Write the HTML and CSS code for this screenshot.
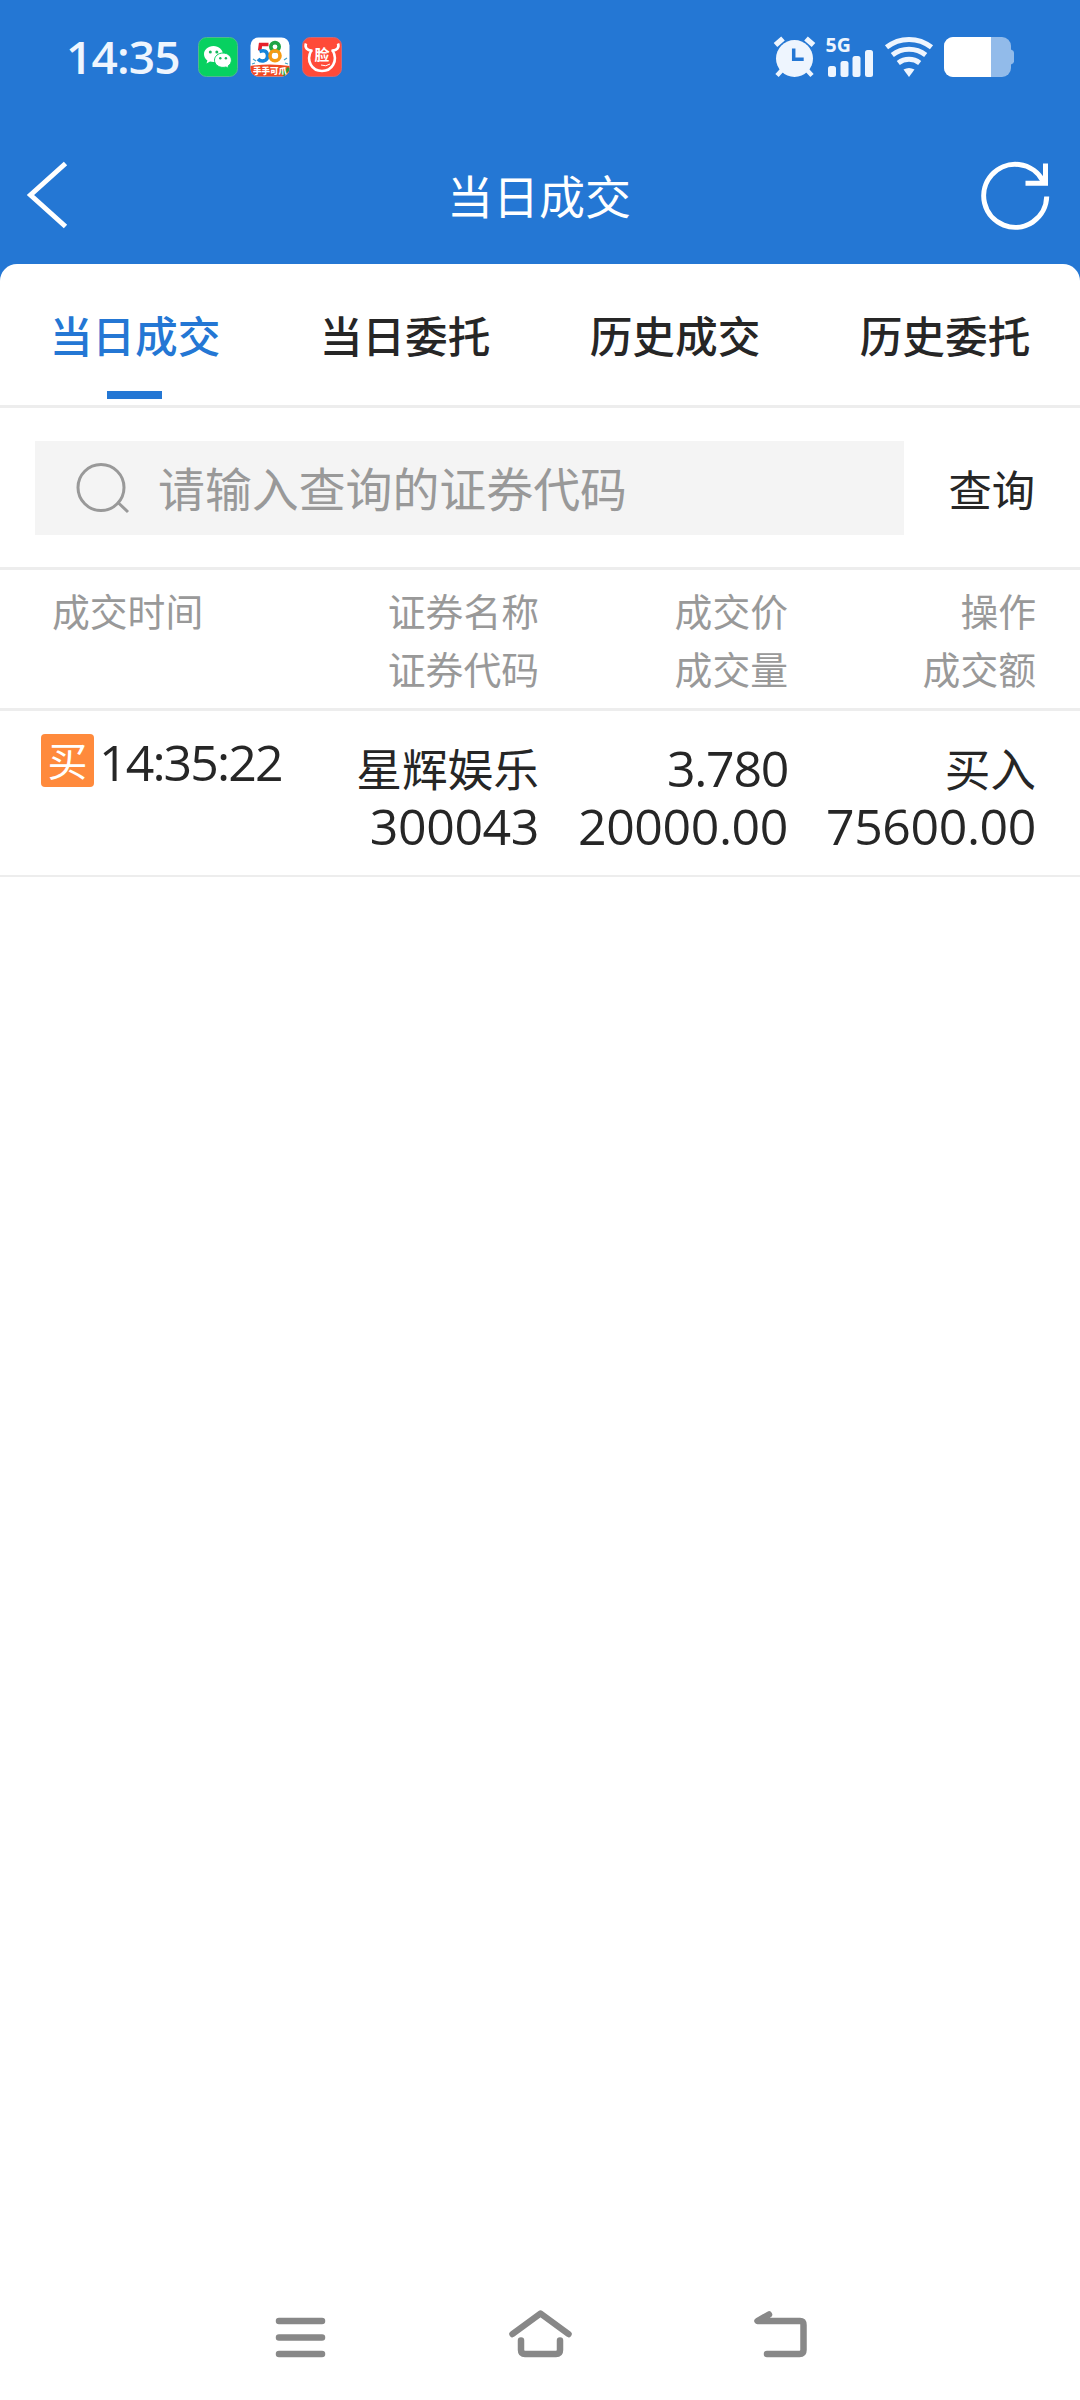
FILE: index.html
```html
<!DOCTYPE html>
<html lang="zh-CN">
<head>
<meta charset="utf-8">
<title>当日成交</title>
<link rel="stylesheet" href="styles.css">
</head>
<body>
<div class="screen">
  <header class="top">
    <div class="status">
      <span class="clock">14:35</span>
      <svg class="app-icon" width="40" height="40" viewBox="0 0 40 40">
        <rect x="0.5" y="0.5" width="39" height="39" rx="8" fill="#07d160" stroke="#4fb98f"/>
        <path d="M15.500 9C10 9 6 12.700 6 17.200c0 2.600 1.300 4.700 3.400 6.200l-.9 3 3.500-1.800c1.100.3 2.300.5 3.500.5 5.400 0 9.400-3.500 9.400-7.900S20.900 9 15.500 9z" fill="#fff"/>
        <path d="M25 16c-4.900 0-8.500 3.300-8.500 7.200s3.600 7.200 8.500 7.200c1 0 2-.2 3-.4l2.900 1.500-.8-2.500c2-1.400 3.300-3.400 3.300-5.800 0-3.900-3.500-7.200-8.400-7.200z" fill="#fff" stroke="#07d160" stroke-width="1"/>
        <circle cx="12.300" cy="15" r="1.500" fill="#15b85c"/><circle cx="18.800" cy="15" r="1.500" fill="#15b85c"/>
        <circle cx="22.300" cy="21.300" r="1.200" fill="#15b85c"/><circle cx="27.900" cy="21.300" r="1.200" fill="#15b85c"/>
      </svg>
      <svg class="app-icon" width="40" height="40" viewBox="0 0 40 40">
        <clipPath id="round"><rect x="0.500" y="0.500" width="39" height="39" rx="8"/></clipPath>
        <g clip-path="url(#round)">
          <rect width="40" height="40" fill="#fff"/>
          <path d="M0 29q20-3 40 0v11H0z" fill="#f04a22"/>
          <g fill="none" stroke-width="3.600">
            <path d="M18.500 7.500h-8l-.8 6" stroke="#e5202b"/>
            <path d="M9.500 14.500q7-2.500 8 3.500c.6 7-7 7-9.500 4" stroke="#1685d9"/>
            <circle cx="25" cy="9.800" r="4.200" stroke="#1ea446"/>
            <circle cx="25" cy="18.800" r="5" stroke="#f59a13"/>
          </g>
          <path d="M3 22l3 2M2 27l3-1M34 23l3-2M35 26l3 1" stroke="#45a3c9" stroke-width="1.300"/>
          <path d="M31 34l3 3 5-6" fill="none" stroke="#289a39" stroke-width="3"/>
          <text x="3" y="37" class="promo">手手可爪</text>
        </g>
      </svg>
      <svg class="app-icon" width="40" height="40" viewBox="0 0 40 40">
        <rect x="0.500" y="0.500" width="39" height="39" rx="8" fill="#ff4a38" stroke="#c9697a"/>
        <g fill="none" stroke="#fff">
          <path d="M4 6.500c-1.500 4 1 7.500 6.500 7M36 6.500c1.500 4-1 7.500-6.500 7" stroke-width="2.600"/>
          <path d="M9.500 13C3.500 24 10 34 20 34s16.500-10 10.500-21" stroke-width="2.600"/>
          <path d="M19 28q5 2 9-1" stroke-width="1"/>
        </g>
        <text x="12.500" y="23" class="face">脸</text>
      </svg>
      <svg class="system" width="246" height="54" viewBox="772 25 246 54">
        <g fill="#eef5fe">
          <circle cx="794.500" cy="58.500" r="18.500"/>
          <g stroke="#eef5fe" stroke-width="5.500">
            <path d="M775.500 45l7.500-6.500M813.500 45l-7.500-6.500"/>
            <path d="M782.500 69.500l-5.500 6M806.500 69.500l5.500 6" stroke-width="4.500"/>
          </g>
          <path d="M793.700 48.500v10.700h10" fill="none" stroke="#2477d4" stroke-width="3.500"/>
          <text x="825.500" y="52" class="network">5G</text>
          <rect x="828" y="66" width="8" height="11" rx="2.500"/>
          <rect x="840.500" y="61" width="8" height="16" rx="2.500"/>
          <rect x="852.500" y="56" width="8" height="21" rx="2.500"/>
          <rect x="865" y="50" width="8" height="27" rx="2.500"/>
          <path d="M909 77l-5.500-7.500q5.500-3 11 0z"/>
          <g fill="none" stroke="#eef5fe" stroke-width="5">
            <path d="M886.500 47.300a36 36 0 0 1 45 0"/>
            <path d="M892.300 55a27 27 0 0 1 33.400 0"/>
            <path d="M898.300 63a17.500 17.500 0 0 1 21.400 0"/>
          </g>
        </g>
        <rect x="944" y="37" width="67" height="40" rx="9" fill="#92bbea"/>
        <path d="M953 37h38v40h-38a9 9 0 0 1-9-9V46a9 9 0 0 1 9-9z" fill="#fff"/>
        <path d="M1011 49.500q3 1 3 3v9q0 2-3 3z" fill="#92bbea"/>
      </svg>
    </div>
    <div class="nav">
      <svg width="48" height="72" viewBox="24 159 48 72"><path d="M65.500 163.500L30.500 195l35 31.500" fill="none" stroke="#fff" stroke-width="5"/></svg>
      <h1 class="title">当日成交</h1>
      <svg width="72" height="72" viewBox="979 159 72 72">
        <g fill="none" stroke="#fff" stroke-width="5">
          <path d="M1046.700 196.500A31.500 31.500 0 1 1 1043 181"/>
          <path d="M1045.500 163.500v19.800h-20"/>
        </g>
      </svg>
    </div>
  </header>
  <nav class="tabs">
    <span class="tab active">当日成交</span>
    <span class="tab">当日委托</span>
    <span class="tab">历史成交</span>
    <span class="tab">历史委托</span>
  </nav>
  <section class="search">
    <div class="field">
      <svg width="54" height="54" viewBox="76 460 54 54"><g fill="none" stroke="#999" stroke-width="3"><circle cx="101" cy="486.500" r="23"/><path d="M117.500 501l10.500 10"/></g></svg>
      <span class="placeholder">请输入查询的证券代码</span>
    </div>
    <span class="query">查询</span>
  </section>
  <section class="grid head">
    <div class="time">成交时间</div>
    <div>证券名称<br>证券代码</div>
    <div>成交价<br>成交量</div>
    <div>操作<br>成交额</div>
  </section>
  <section class="grid row">
    <div class="stamp"><span class="tag">买</span><span class="num clocked">14:35:22</span></div>
    <div><p class="zh">星辉娱乐</p><p class="num">300043</p></div>
    <div><p class="num price">3.780</p><p class="num">20000.00</p></div>
    <div><p class="zh">买入</p><p class="num">75600.00</p></div>
  </section>
  <footer class="system-nav">
    <svg width="540" height="60" viewBox="270 2305 540 60">
      <g fill="none" stroke="#888" stroke-width="6.500" stroke-linecap="round" stroke-linejoin="round">
        <path d="M279 2321h43M279 2337.500h43M279 2354h43"/>
        <path d="M512.500 2334l28-20.500 28 20.500M521 2340.500v9.500q0 4 4 4h31q4 0 4-4v-9.500"/>
        <path d="M769 2314.500l-11.500 6.500H800q3.500 0 3.500 4v25q0 4-4 4H767"/>
      </g>
    </svg>
  </footer>
</div>
</body>
</html>
```

FILE: styles.css
```css
* { box-sizing: border-box; }
body {
  margin: 0;
  background: #fff;
  color: #262626;
  font-family: "Noto Sans CJK SC", sans-serif;
}
p { margin: 0; }
.screen {
  width: 1080px;
  height: 2400px;
  display: flex;
  flex-direction: column;
  background: linear-gradient(#2477d4 300px, #fff 300px);
}
.top { height: 264px; color: #fff; }
.status {
  height: 124px;
  padding: 25px 62px 0 66px;
  display: flex;
  align-items: flex-start;
}
.clock {
  width: 132px;
  padding-top: 9px;
  color: #eef5fe;
  font: 600 46px/44px "Open Sans", sans-serif;
  letter-spacing: -0.8px;
}
.app-icon { margin: 12px 12px 0 0; }
.system { margin-left: auto; }
.promo { font: 900 8.500px "Noto Sans CJK SC", sans-serif; fill: #fff; }
.face { font: 700 15px "Noto Sans CJK SC", sans-serif; fill: #fff; }
.network { font: bold 19.500px "Open Sans", sans-serif; }
.nav {
  height: 140px;
  padding: 2px 29px 0 24px;
  display: flex;
  align-items: center;
  justify-content: space-between;
}
.title {
  margin: 0 0 2px 27px;
  font-size: 46px;
  font-weight: 400;
  line-height: 60px;
}
.tabs {
  height: 144px;
  display: grid;
  grid-template-columns: repeat(4, 1fr);
  border-bottom: 3px solid #ededed;
  border-radius: 17px 17px 0 0;
  background: #fff;
}
.tab {
  display: flex;
  flex-direction: column;
  align-items: center;
  padding-top: 40px;
  font-size: 42.700px;
  font-weight: 500;
  line-height: 60px;
}
.active { color: #2477d4; }
.active::after {
  content: "";
  width: 55px;
  height: 8px;
  margin: 27px 1px 0 0;
  background: #2477d4;
}
.search {
  height: 162px;
  padding: 0 45px 0 35px;
  display: flex;
  align-items: center;
  justify-content: space-between;
  background: #fff;
  border-bottom: 3px solid #ededed;
}
.field {
  width: 869px;
  height: 94px;
  padding: 0 0 0 41px;
  display: flex;
  align-items: center;
  gap: 28px;
  background: #f4f4f4;
}
.placeholder { padding-bottom: 2px; color: #999; font-size: 46.900px; line-height: 60px; }
.query { font-size: 43.300px; line-height: 60px; }
.grid {
  display: grid;
  grid-template-columns: 291px 248px 249px 248px;
  text-align: right;
  line-height: 58px;
  background: #fff;
}
.head {
  height: 141px;
  padding-top: 11px;
  border-bottom: 3px solid #ededed;
  color: #999;
  font-size: 37.800px;
}
.time { padding-left: 52px; text-align: left; }
.row { height: 166px; padding-top: 28px; border-bottom: 2px solid #ededed; }
.row p { height: 58px; }
.zh { font-size: 45.700px; line-height: 56px; }
.num {
  font-family: "Open Sans", sans-serif;
  font-size: 50px;
  letter-spacing: -0.4px;
}
.price { letter-spacing: -1.300px; }
.stamp {
  display: flex;
  align-items: flex-start;
  margin-top: -5px;
  padding-left: 41px;
  gap: 5px;
}
.tag {
  width: 53px;
  height: 53px;
  border-radius: 4px;
  background: #ff8a3c;
  color: #fff;
  font-size: 40px;
  line-height: 50px;
  text-align: center;
}
.clocked { letter-spacing: -1.900px; line-height: 56px; }
.system-nav {
  margin-top: auto;
  height: 95px;
  display: flex;
  justify-content: center;
  align-items: flex-start;
}
```
